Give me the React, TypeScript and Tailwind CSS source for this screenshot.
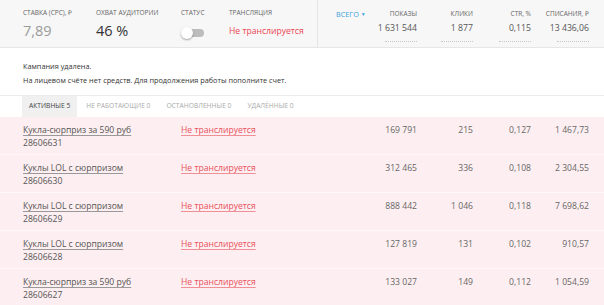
const rows = [
  { name: 'Кукла-сюрприз за 590 руб', id: '28606631', shows: '169 791', clicks: '215', ctr: '0,127', spend: '1 467,73' },
  { name: 'Куклы LOL с сюрпризом', id: '28606630', shows: '312 465', clicks: '336', ctr: '0,108', spend: '2 304,55' },
  { name: 'Куклы LOL с сюрпризом', id: '28606629', shows: '888 442', clicks: '1 046', ctr: '0,118', spend: '7 698,62' },
  { name: 'Куклы LOL с сюрпризом', id: '28606628', shows: '127 819', clicks: '131', ctr: '0,102', spend: '910,57' },
  { name: 'Кукла-сюрприз за 590 руб', id: '28606627', shows: '133 027', clicks: '149', ctr: '0,112', spend: '1 054,59' },
];

const tabs = [
  { label: 'Активные 5', active: true },
  { label: 'Не работающие 0' },
  { label: 'Остановленные 0' },
  { label: 'Удалённые 0' },
];

function Total({ label, value, width }: { label: string; value: string; width: string }) {
  return (
    <div className={`${width} flex flex-col items-end`}>
      <span className="text-[6.5px] leading-[8px] uppercase text-[#666]">{label}</span>
      <span className="mt-[4px] text-[8.7px] leading-[12px] text-[#555]">{value}</span>
      <span className="mt-[7px] w-[32px] border-b border-dotted border-[#c8c8c8]" />
    </div>
  );
}

export default function App() {
  return (
    <div className="w-[604px] h-[305px] overflow-hidden bg-white" style={{ fontFamily: '"Open Sans", sans-serif' }}>
      {/* Header stats */}
      <div className="h-[48px] flex bg-[#f7f7f7] border-b border-[#e6e6e6]">
        <div className="w-[318px] flex pl-[23px] pt-[9px] border-r border-[#e4e4e4]">
          <div className="w-[73px] flex flex-col">
            <span className="text-[6.5px] leading-[8px] uppercase text-[#666]">Ставка (CPC), ₽</span>
            <span className="mt-[5px] text-[14.5px] leading-[18px] text-[#9a9a9a]">7,89</span>
          </div>
          <div className="w-[85px] flex flex-col">
            <span className="text-[6.5px] leading-[8px] uppercase text-[#666]">Охват аудитории</span>
            <span className="mt-[5px] text-[14.5px] leading-[18px] text-[#333]">46 %</span>
          </div>
          <div className="w-[48px] flex flex-col">
            <span className="text-[6.5px] leading-[8px] uppercase text-[#666]">Статус</span>
            <div className="mt-[10px] relative w-[24px] h-[12px]">
              <div className="absolute left-[4px] top-[2px] w-[19px] h-[8px] rounded-full bg-[#bdbdbd]" />
              <div className="absolute left-0 top-0 w-[12px] h-[12px] rounded-full bg-white shadow-[0_1px_2px_rgba(0,0,0,0.35)]" />
            </div>
          </div>
          <div className="flex flex-col">
            <span className="text-[6.5px] leading-[8px] uppercase text-[#666]">Трансляция</span>
            <span className="mt-[8px] text-[8.6px] leading-[12px] text-[#ec4651]">Не транслируется</span>
          </div>
        </div>
        <div className="flex pl-[18px] pt-[10px]">
          <div className="w-[23px] text-[7.3px] leading-[8px] uppercase text-[#3b9fdb] whitespace-nowrap">
            Всего <span className="text-[5px] align-[1px]">▼</span>
          </div>
          <Total label="Показы" value="1 631 544" width="w-[58px]" />
          <Total label="Клики" value="1 877" width="w-[56px]" />
          <Total label="CTR, %" value="0,115" width="w-[58px]" />
          <Total label="Списания, ₽" value="13 436,06" width="w-[58px]" />
        </div>
      </div>

      {/* Messages */}
      <div className="pl-[23px] pt-[11px] pb-[8px] text-[7.3px] leading-[14px] text-[#333] border-b border-[#ececec]">
        <p>Кампания удалена.</p>
        <p>На лицевом счёте нет средств. Для продолжения работы пополните счет.</p>
      </div>

      {/* Tabs */}
      <div className="flex pl-[22px] h-[21px]">
        {tabs.map((t) => (
          <div
            key={t.label}
            className={`px-[7px] mr-[2px] flex items-center text-[6.7px] uppercase ${t.active ? 'bg-[#f0f0f0] text-[#444]' : 'text-[#aaa]'}`}
          >
            {t.label}
          </div>
        ))}
      </div>

      {/* Rows */}
      <div className="bg-[#fdeff1]">
        {rows.map((r) => (
          <div key={r.id} className="h-[38px] flex pl-[23px] pt-[7px] border-b border-[#fff7f8] text-[8.6px] leading-[12px]">
            <div className="w-[158px] flex flex-col">
              <span className="text-[#555] underline decoration-[#999] underline-offset-2">{r.name}</span>
              <span className="mt-[1px] text-[#555]">{r.id}</span>
            </div>
            <div className="w-[160px]">
              <span className="text-[#e9505b] underline decoration-[#f08f96] underline-offset-2">Не транслируется</span>
            </div>
            <div className="w-[76px] text-right text-[#666]">{r.shows}</div>
            <div className="w-[56px] text-right text-[#666]">{r.clicks}</div>
            <div className="w-[58px] text-right text-[#666]">{r.ctr}</div>
            <div className="w-[58px] text-right text-[#666]">{r.spend}</div>
          </div>
        ))}
      </div>
    </div>
  );
}
